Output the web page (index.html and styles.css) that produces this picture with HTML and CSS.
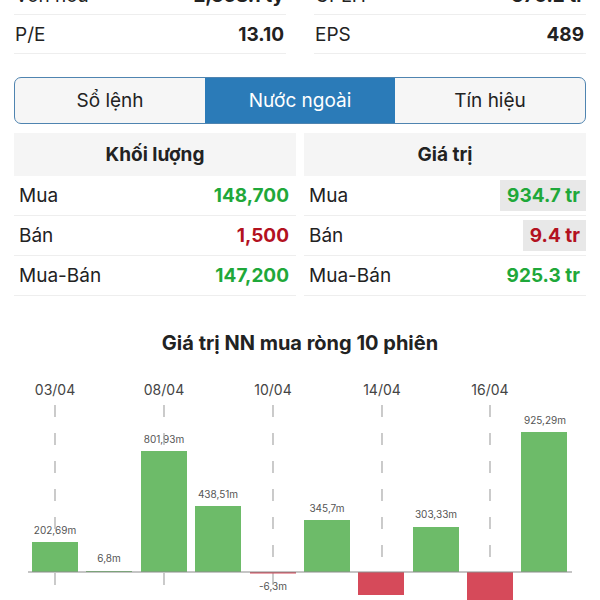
FILE: index.html
```html
<!DOCTYPE html>
<html lang="vi">
<head>
<meta charset="utf-8">
<title>Nước ngoài</title>
<link rel="stylesheet" href="styles.css">
</head>
<body>
<div class="page">
  <div class="content">
    <div class="stats">
      <div class="stat"><span class="k">Vốn hoá</span><span class="v">2,368.1 tỷ</span></div>
      <div class="stat"><span class="k">CPLH</span><span class="v">370.2 tr</span></div>
      <div class="stat"><span class="k">P/E</span><span class="v">13.10</span></div>
      <div class="stat"><span class="k">EPS</span><span class="v">489</span></div>
    </div>

    <div class="tabs">
      <div class="tab">Sổ lệnh</div>
      <div class="tab active">Nước ngoài</div>
      <div class="tab">Tín hiệu</div>
    </div>

    <div class="tables">
      <div class="tbl">
        <div class="th">Khối lượng</div>
        <div class="tr"><span class="lbl">Mua</span><span class="val up">148,700</span></div>
        <div class="tr"><span class="lbl">Bán</span><span class="val down">1,500</span></div>
        <div class="tr"><span class="lbl">Mua-Bán</span><span class="val up">147,200</span></div>
      </div>
      <div class="tbl">
        <div class="th">Giá trị</div>
        <div class="tr"><span class="lbl">Mua</span><span class="val up hl">934.7 tr</span></div>
        <div class="tr"><span class="lbl">Bán</span><span class="val down hl">9.4 tr</span></div>
        <div class="tr"><span class="lbl">Mua-Bán</span><span class="val up">925.3 tr</span></div>
      </div>
    </div>
  </div>

  <h2 class="chart-title">Giá trị NN mua ròng 10 phiên</h2>

  <svg class="chart" width="600" height="230" viewBox="0 370 600 230" xmlns="http://www.w3.org/2000/svg">
    <g class="dates">
      <text x="55" y="395">03/04</text>
      <text x="164" y="395">08/04</text>
      <text x="273" y="395">10/04</text>
      <text x="382" y="395">14/04</text>
      <text x="490" y="395">16/04</text>
    </g>
    <g class="vlabels">
      <text x="55" y="534">202,69m</text>
      <text x="109" y="562">6,8m</text>
      <text x="164" y="443">801,93m</text>
      <text x="218" y="498">438,51m</text>
      <text x="273" y="590">-6,3m</text>
      <text x="327" y="512">345,7m</text>
      <text x="436" y="518">303,33m</text>
      <text x="545" y="424">925,29m</text>
    </g>
    <g class="grid">
      <line x1="55" y1="405" x2="55" y2="585"/>
      <line x1="164" y1="405" x2="164" y2="585"/>
      <line x1="273" y1="405" x2="273" y2="585"/>
      <line x1="382" y1="405" x2="382" y2="585"/>
      <line x1="490" y1="405" x2="490" y2="585"/>
    </g>
    <g class="bars">
      <rect class="pos" x="32" y="542" width="46" height="30"/>
      <rect class="pos" x="86" y="571" width="46" height="1"/>
      <rect class="pos" x="141" y="451" width="46" height="121"/>
      <rect class="pos" x="195" y="506" width="46" height="66"/>
      <rect class="neg" x="250" y="572" width="46" height="1.5"/>
      <rect class="pos" x="304" y="520" width="46" height="52"/>
      <rect class="neg" x="358" y="572" width="46" height="23"/>
      <rect class="pos" x="413" y="527" width="46" height="45"/>
      <rect class="neg" x="467" y="572" width="46" height="40"/>
      <rect class="pos" x="521" y="432" width="46" height="140"/>
    </g>
    <line class="axis" x1="28" y1="572" x2="572" y2="572"/>
  </svg>
</div>
</body>
</html>
```

FILE: styles.css
```css
* { box-sizing: border-box; }

html, body {
  margin: 0;
  padding: 0;
  background: #ffffff;
}

body {
  font-family: Inter, "Noto Sans", "DejaVu Sans", sans-serif;
  color: #222222;
  width: 600px;
  height: 600px;
  overflow: hidden;
}

.content {
  padding: 0 14px;
}

/* top stats */
.stats {
  margin-top: -24px;
  display: grid;
  grid-template-columns: 1fr 1fr;
  column-gap: 28px;
}

.stat {
  height: 39px;
  display: flex;
  align-items: center;
  justify-content: space-between;
  border-bottom: 1px solid #eeeeee;
  padding: 0 2px 0 1px;
  font-size: 19px;
}

.stat .v {
  font-weight: 700;
}

/* segmented tabs */
.tabs {
  margin-top: 23px;
  height: 47px;
  display: grid;
  grid-template-columns: 1fr 1fr 1fr;
  border: 1px solid #4f84b0;
  border-radius: 7px;
  overflow: hidden;
  background: #f6f6f6;
}

.tab {
  display: flex;
  align-items: center;
  justify-content: center;
  font-size: 19px;
  color: #222222;
}

.tab.active {
  background: #2b7bb8;
  color: #ffffff;
}

/* tables */
.tables {
  margin-top: 9px;
  display: grid;
  grid-template-columns: 1fr 1fr;
  column-gap: 8px;
}

.th {
  height: 43px;
  background: #f5f5f5;
  display: flex;
  align-items: center;
  justify-content: center;
  font-size: 19px;
  font-weight: 700;
  color: #222222;
}

.tr {
  height: 40px;
  display: flex;
  align-items: center;
  justify-content: space-between;
  border-bottom: 1px solid #eeeeee;
  padding-left: 5px;
  font-size: 19px;
}

.val {
  font-weight: 700;
  height: 31px;
  line-height: 31px;
  padding: 0 7px;
}

.val.hl {
  background: #e8e8e8;
  padding: 0 6px 0 7px;
}

.tbl + .tbl .val {
  padding-right: 6px;
}

.up { color: #1fa83a; }
.down { color: #b3121f; }

/* chart */
.chart-title {
  margin: 35px 0 0 0;
  height: 24px;
  line-height: 24px;
  text-align: center;
  font-size: 20px;
  font-weight: 700;
  color: #222222;
}

.chart {
  display: block;
  margin-top: 15px;
}

.dates text {
  font-size: 14px;
  fill: #444444;
  text-anchor: middle;
}

.vlabels text {
  font-size: 10px;
  fill: #555555;
  text-anchor: middle;
}

.grid line {
  stroke: #a8a8a8;
  stroke-width: 1.2;
  stroke-dasharray: 12 16;
}

.bars .pos { fill: #6dbb69; }
.bars .neg { fill: #d64a5a; }

.axis {
  stroke: #8c8c8c;
  stroke-width: 1.2;
}
```
